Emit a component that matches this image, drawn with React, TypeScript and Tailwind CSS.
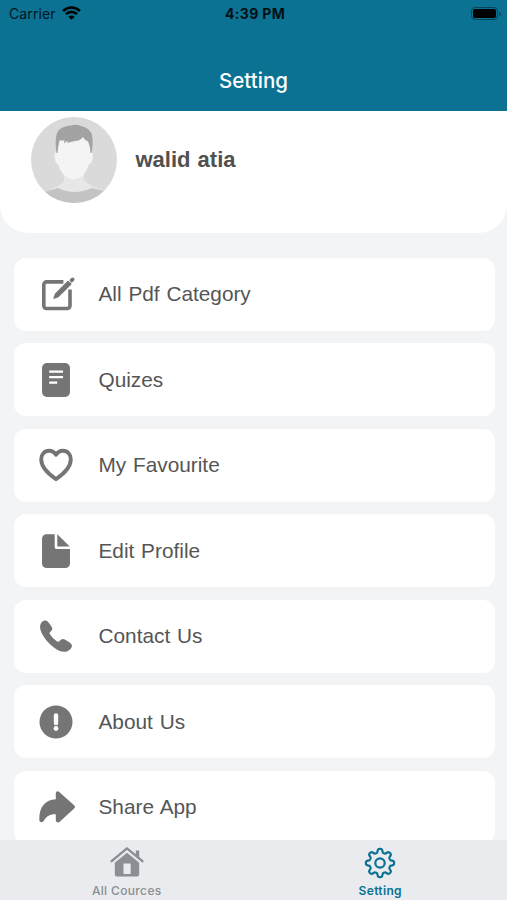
import type { ReactNode } from 'react';

interface MenuItem {
  label: string;
  icon: ReactNode;
}

function EditIcon() {
  return (
    <svg className="h-10 w-10" viewBox="0 0 40 40" fill="none">
      <path
        d="M27.4 7.900H10.600a2.800 2.800 0 0 0-2.800 2.800v21a2.800 2.800 0 0 0 2.800 2.800h20.600a2.800 2.800 0 0 0 2.800-2.800V15.600"
        stroke="currentColor"
        strokeWidth="3.600"
      />
      <path
        d="M32 7.400 19.600 20.100l-1.600 4.100 4.200-1.700L34.900 10Z"
        fill="currentColor"
        stroke="currentColor"
        strokeWidth="1.400"
        strokeLinejoin="round"
      />
      <path d="m35.600 6.400 1-1" stroke="currentColor" strokeWidth="3.800" strokeLinecap="round" />
    </svg>
  );
}

function QuizIcon() {
  return (
    <svg className="h-10 w-10" viewBox="0 0 40 40" fill="none">
      <rect x="6" y="3" width="28" height="34" rx="5" fill="currentColor" />
      <path d="M13.200 11.600h13.800M13.200 17.200h13.800M13.200 22.600h8" stroke="#fff" strokeWidth="2.200" />
    </svg>
  );
}

function HeartIcon() {
  return (
    <svg className="h-10 w-10" viewBox="0 0 40 40" fill="none">
      <path
        d="M20 9.800C18.500 7.300 15.800 5.700 12.900 5.700 8.400 5.700 5.200 9.500 5.200 14.300c0 8.600 8.200 15.400 14.800 19.800 6.600-4.400 14.800-11.200 14.800-19.800C34.800 9.500 31.600 5.700 27.100 5.700c-2.900 0-5.600 1.600-7.100 4.100Z"
        stroke="currentColor"
        strokeWidth="3.900"
        strokeLinejoin="round"
      />
    </svg>
  );
}

function DocumentIcon() {
  return (
    <svg className="h-10 w-10" viewBox="0 0 40 40" fill="currentColor">
      <path d="M10.500 3.200H18.700V16.200a1.800 1.800 0 0 0 1.800 1.800H34v14.500a4.500 4.500 0 0 1-4.500 4.500h-19A4.500 4.500 0 0 1 6 32.500V7.700a4.500 4.500 0 0 1 4.500-4.500Z" />
      <path d="M21.300 3.200 33.700 15.400H21.300Z" />
    </svg>
  );
}

function PhoneIcon() {
  return (
    <svg className="h-10 w-10" viewBox="0 0 40 40" fill="currentColor">
      <path d="M5.600 6.300C7.300 4.300 10 3.900 11.700 5.500c1.600 1.600 3 3.700 4.200 5.800.8 1.500.4 2.900-.9 4l-1.100 1c-.5.600-.4 1.200.1 2 1.700 2.700 4.300 5.300 7.100 7.100.9.600 1.600.5 2.200-.1l1.300-1.300c1.300-1.200 2.700-1.300 4.200-.5 2.200 1.200 4.500 2.700 6.200 4.300 1.600 1.500 1.100 3.700-.7 5.500-2.600 2.700-6.700 3.200-10.700 1.700C16.500 31.900 7.200 22.600 4.600 14.300c-.9-3-.7-6.100 1-8Z" />
    </svg>
  );
}

function AlertIcon() {
  return (
    <svg className="h-10 w-10" viewBox="0 0 40 40" fill="none">
      <circle cx="20" cy="20" r="16.500" fill="currentColor" />
      <path d="M20 13.400v7.600" stroke="#fff" strokeWidth="4.400" strokeLinecap="round" />
      <circle cx="20" cy="26.500" r="2.400" fill="#fff" />
    </svg>
  );
}

function ShareIcon() {
  return (
    <svg className="h-10 w-10" viewBox="0 0 40 40" fill="currentColor">
      <path d="M19.800 6.200c0-1.700 1.900-2.600 3.400-1.300L38.100 18.200c1.200 1.100 1.200 2.300 0 3.400L24 34.600c-1.700 1.600-4.200.8-4.200-1.300V27.300c-5.300-.1-9.400 1.600-11.800 6.300-1.300 2.600-4.600 2.200-4.700-.8C3 19.600 9.600 12.600 19.800 12.300Z" />
    </svg>
  );
}

function HomeIcon() {
  return (
    <svg className="h-[34px] w-[36px]" viewBox="0 0 36 34" fill="none">
      <path d="M2.600 16.200 18 3.400 33.400 16.200" stroke="currentColor" strokeWidth="2.400" strokeLinecap="round" strokeLinejoin="round" />
      <path d="M26.800 5.500h3.400v8l-3.400-2.800Z" fill="currentColor" />
      <path
        d="M18 7.700 30.200 17.800V28.900a2.500 2.500 0 0 1-2.500 2.500H8.300a2.500 2.500 0 0 1-2.500-2.500V17.800ZM14.500 18.600v10.400h7.200v-10.400Z"
        fill="currentColor"
        fillRule="evenodd"
      />
    </svg>
  );
}

// outline of an eight-toothed cog, sampled around the circle
const gearPoints = Array.from({ length: 192 }, (_, i) => {
  const angle = (i / 192) * Math.PI * 2;
  const radius = 12.3 + 1.85 * Math.tanh(2 * Math.cos(angle * 8));
  return `${(17 + radius * Math.cos(angle)).toFixed(2)},${(17 + radius * Math.sin(angle)).toFixed(2)}`;
}).join(' ');

function GearIcon() {
  return (
    <svg className="h-[34px] w-[34px]" viewBox="0 0 34 34" fill="none" stroke="currentColor" strokeWidth="2.200" strokeLinejoin="round">
      <polygon points={gearPoints} />
      <circle cx="17" cy="17" r="4.700" />
    </svg>
  );
}

function WifiIcon() {
  return (
    <svg className="h-[15px] w-[19px]" viewBox="0 0 19 15" fill="none" stroke="#000" strokeWidth="2.600">
      <path d="M1.100 5a12 12 0 0 1 16.800 0M4 8.100a7.800 7.800 0 0 1 11 0" />
      <path d="M9.500 13.800 6.400 10.700a4.400 4.400 0 0 1 6.200 0Z" fill="#000" stroke="none" />
    </svg>
  );
}

function Avatar() {
  return (
    <svg className="h-[86px] w-[86px] shrink-0 rounded-full" viewBox="0 0 86 86">
      <rect width="86" height="86" fill="#dadada" />
      <path d="M33 57h20v6q4 5 15 9L44 82 19 72q12-3 14-9Z" fill="#e7e7e7" />
      <path d="M10 77q8-4 17-6 16 8 34 0 9 2 17 6v12H10Z" fill="#c3c3c3" />
      <path
        d="M26 35q-3 0-2.500 4 .6 8 4 9 2 8 8.500 12.500 7.500 4 14-.5Q56 55 57.500 48q4-2 4.500-9 .3-4-2.500-4L57 19H29Z"
        fill="#f4f4f4"
      />
      <path
        d="M25.500 36q-2-13 .5-20Q29 9 40 8.500q5-1.500 10 .5 9 2 11 9 1.500 8-.5 18h-1q-.5-9-3-12-3-1-4.500-4-3 4-8 4-4 1-8 2l1-2q-2 0-4 2.500l.5-3h-5Q27 29 26.500 36Z"
        fill="#a3a3a3"
      />
    </svg>
  );
}

const menuItems: MenuItem[] = [
  { label: 'All Pdf Category', icon: <EditIcon /> },
  { label: 'Quizes', icon: <QuizIcon /> },
  { label: 'My Favourite', icon: <HeartIcon /> },
  { label: 'Edit Profile', icon: <DocumentIcon /> },
  { label: 'Contact Us', icon: <PhoneIcon /> },
  { label: 'About Us', icon: <AlertIcon /> },
  { label: 'Share App', icon: <ShareIcon /> },
];

export default function App() {
  return (
    <div className="flex h-[900px] w-[507px] flex-col overflow-hidden bg-[#f2f4f6] font-['Liberation_Sans',Arial,sans-serif]">
      <header className="h-[110.5px] shrink-0 bg-[#0b7294] font-[Inter,sans-serif]">
        <div className="grid h-[27px] grid-cols-3 items-center pr-1.5 pl-[9px] text-black">
          <div className="flex items-center gap-1.5">
            <span className="text-[14px] tracking-[0.1px] opacity-80">Carrier</span>
            <WifiIcon />
          </div>
          <span className="text-center text-[14px] font-bold tracking-[0.35px] opacity-85">4:39 PM</span>
          <div className="flex items-center justify-end gap-px">
            <div className="h-[13px] w-[27px] rounded-[4px] border border-black/40 p-px">
              <div className="h-full rounded-[2px] bg-black" />
            </div>
            <div className="h-1 w-0.5 rounded-r bg-black/40" />
          </div>
        </div>
        <h1 className="mt-[37.5px] text-center text-[20.5px] leading-8 font-medium text-white">Setting</h1>
      </header>

      <section className="flex h-[122px] shrink-0 items-start rounded-b-[28px] bg-white pt-1.5 pl-[31px]">
        <Avatar />
        <p className="ml-[18.5px] pt-[27px] text-[22px] leading-8 font-bold text-[#505050] [word-spacing:1px]">walid atia</p>
      </section>

      <main className="mt-[25px] flex min-h-0 flex-1 flex-col gap-[12.5px] overflow-hidden pr-[12.5px] pl-[13.5px]">
        {menuItems.map((item) => (
          <button key={item.label} className="flex h-[73px] shrink-0 items-center rounded-[12px] bg-white text-left">
            <span className="ml-[22.5px] flex w-10 justify-center text-[#757575]">{item.icon}</span>
            <span className="ml-[22.5px] text-[20.8px] text-[#555] [word-spacing:1px]">{item.label}</span>
          </button>
        ))}
      </main>

      <nav className="grid h-[60px] shrink-0 grid-cols-2 bg-[#e9ebee] font-[Inter,sans-serif] text-[12px] font-medium">
        <button className="flex flex-col items-center pt-[5px] text-[#8b8e92]">
          <HomeIcon />
          <span className="mt-1 leading-4 tracking-[0.35px]">All Cources</span>
        </button>
        <button className="flex flex-col items-center pt-[6px] text-[#0b7294]">
          <GearIcon />
          <span className="mt-[3px] leading-4 font-semibold tracking-[0.35px]">Setting</span>
        </button>
      </nav>
    </div>
  );
}
